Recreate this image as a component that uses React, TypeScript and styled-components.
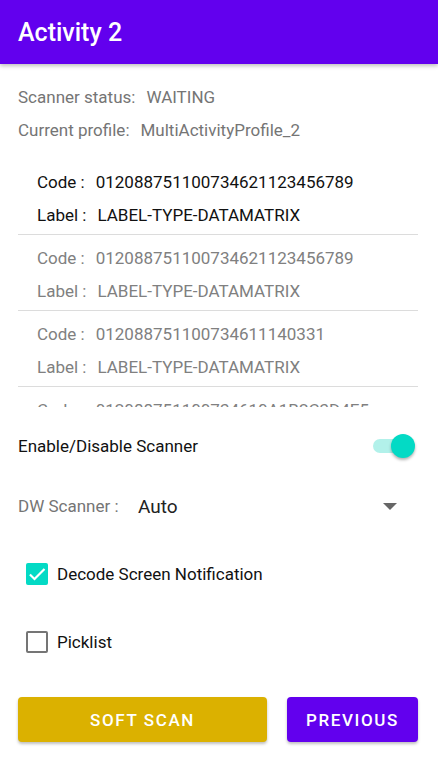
import React from "react";
import styled, { createGlobalStyle } from "styled-components";

const Global = createGlobalStyle`
  html, body { margin: 0; padding: 0; background: #fff; }
  body { font-family: Roboto, "Noto Sans", sans-serif; }
  * { box-sizing: border-box; }
`;

const Screen = styled.div`
  width: 438px;
  height: 780px;
  display: flex;
  flex-direction: column;
  background: #fff;
  overflow: hidden;
`;

const AppBar = styled.header`
  height: 64px;
  flex: none;
  background: #6200ee;
  color: #fff;
  display: flex;
  align-items: center;
  padding-left: 18px;
  font-size: 25px;
  font-weight: 500;
  box-shadow: 0 2px 4px rgba(0, 0, 0, 0.25);
  position: relative;
  z-index: 1;
`;

const Content = styled.main`
  display: flex;
  flex-direction: column;
  padding: 16px 20px 0 18px;
`;

const InfoLine = styled.div`
  height: 33px;
  display: flex;
  align-items: center;
  gap: 11px;
  font-size: 17px;
  color: #757575;
`;

const List = styled.div`
  margin-top: 13px;
  height: 248px;
  overflow: hidden;
  display: flex;
  flex-direction: column;
`;

const Item = styled.div`
  flex: none;
  height: 76px;
  padding: 6px 0 0 19px;
  border-bottom: 1px solid #dcdcdc;
  color: ${(p: { $active?: boolean }) => (p.$active ? "#111" : "#808080")};
`;

const ItemLine = styled.div`
  height: 33px;
  display: flex;
  align-items: center;
  font-size: 17px;
  white-space: nowrap;
`;

const ItemKey = styled.span`
  margin-right: 11px;
`;

const Row = styled.div<{ $mt: number }>`
  margin-top: ${(p) => p.$mt}px;
  height: 48px;
  display: flex;
  align-items: center;
  font-size: 17px;
  color: #111;
`;

const Grow = styled.div`
  flex: 1;
`;

const SwitchTrack = styled.div`
  position: relative;
  width: 34px;
  height: 14px;
  border-radius: 7px;
  background: #b2f1ea;
  margin-right: 11px;
`;

const SwitchThumb = styled.div`
  position: absolute;
  right: -8px;
  top: -5px;
  width: 24px;
  height: 24px;
  border-radius: 50%;
  background: #03dac5;
  box-shadow: 0 2px 3px rgba(0, 0, 0, 0.3);
`;

const MutedLabel = styled.span`
  color: #757575;
  width: 120px;
`;

const SpinnerValue = styled.span`
  font-size: 19px;
  color: #222;
`;

const Caret = styled.div`
  width: 0;
  height: 0;
  border-left: 7px solid transparent;
  border-right: 7px solid transparent;
  border-top: 7px solid #666;
  margin-right: 21px;
`;

const CheckRow = styled.label<{ $mt: number }>`
  margin-top: ${(p) => p.$mt}px;
  height: 48px;
  display: flex;
  align-items: center;
  padding-left: 8px;
  gap: 9px;
  font-size: 17px;
  color: #111;
`;

const Box = styled.span<{ $checked?: boolean }>`
  width: 22px;
  height: 22px;
  border-radius: 2px;
  display: flex;
  align-items: center;
  justify-content: center;
  background: ${(p) => (p.$checked ? "#03dac5" : "transparent")};
  border: ${(p) => (p.$checked ? "none" : "2.5px solid #757575")};
`;

const Buttons = styled.div`
  margin-top: 31px;
  display: flex;
  gap: 20px;
`;

const Button = styled.button<{ $bg: string; $w: number }>`
  width: ${(p) => p.$w}px;
  height: 45px;
  border: none;
  border-radius: 4px;
  background: ${(p) => p.$bg};
  color: #fff;
  font-family: Roboto, sans-serif;
  font-size: 17px;
  font-weight: 500;
  letter-spacing: 1.6px;
  box-shadow: 0 2px 3px rgba(0, 0, 0, 0.25);
  padding: 0;
`;

const items = [
  { code: "012088751100734621123456789", active: true },
  { code: "012088751100734621123456789" },
  { code: "012088751100734611140331" },
  { code: "012088751100734610A1B2C3D4E5" },
];

export default function App() {
  return (
    <Screen>
      <Global />
      <AppBar>Activity 2</AppBar>
      <Content>
        <InfoLine>
          <span>Scanner status:</span>
          <span>WAITING</span>
        </InfoLine>
        <InfoLine>
          <span>Current profile:</span>
          <span>MultiActivityProfile_2</span>
        </InfoLine>
        <List>
          {items.map((it, i) => (
            <Item key={i} $active={it.active}>
              <ItemLine>
                <ItemKey>Code :</ItemKey>
                {it.code}
              </ItemLine>
              <ItemLine>
                <ItemKey>Label :</ItemKey>
                LABEL-TYPE-DATAMATRIX
              </ItemLine>
            </Item>
          ))}
        </List>
        <Row $mt={15}>
          <span>Enable/Disable Scanner</span>
          <Grow />
          <SwitchTrack>
            <SwitchThumb />
          </SwitchTrack>
        </Row>
        <Row $mt={12}>
          <MutedLabel>DW Scanner :</MutedLabel>
          <SpinnerValue>Auto</SpinnerValue>
          <Grow />
          <Caret />
        </Row>
        <CheckRow $mt={20}>
          <Box $checked>
            <svg width="20" height="20" viewBox="0 0 24 24">
              <path d="M3.5 12.5l5.5 5.5L21 6" fill="none" stroke="#fff" strokeWidth="2.6" />
            </svg>
          </Box>
          Decode Screen Notification
        </CheckRow>
        <CheckRow $mt={20}>
          <Box />
          Picklist
        </CheckRow>
        <Buttons>
          <Button $bg="#dbb100" $w={249}>SOFT SCAN</Button>
          <Button $bg="#6200ee" $w={131}>PREVIOUS</Button>
        </Buttons>
      </Content>
    </Screen>
  );
}
